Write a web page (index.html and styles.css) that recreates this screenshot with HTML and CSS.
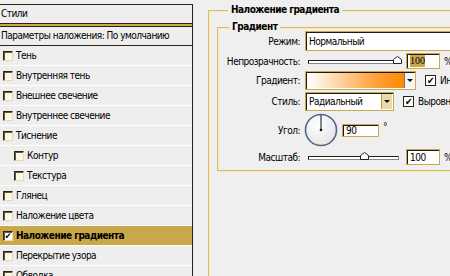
FILE: index.html
```html
<!DOCTYPE html>
<html lang="ru">
<head>
<meta charset="UTF-8">
<title>Стиль слоя</title>
<link rel="stylesheet" href="styles.css">
</head>
<body>
<div class="dialog">
    <div class="styles-panel">
        <div class="panel-title">Стили</div>
        <div class="panel-defaults">Параметры наложения: По умолчанию</div>
        <ul class="effects">
            <li><span class="cb"></span>Тень</li>
            <li><span class="cb"></span>Внутренняя тень</li>
            <li><span class="cb"></span>Внешнее свечение</li>
            <li><span class="cb"></span>Внутреннее свечение</li>
            <li><span class="cb"></span>Тиснение</li>
            <li class="sub"><span class="cb"></span>Контур</li>
            <li class="sub"><span class="cb"></span>Текстура</li>
            <li><span class="cb"></span>Глянец</li>
            <li><span class="cb"></span>Наложение цвета</li>
            <li class="active"><span class="cb checked">&#10004;</span>Наложение градиента</li>
            <li><span class="cb"></span>Перекрытие узора</li>
            <li><span class="cb"></span>Обводка</li>
        </ul>
    </div>

    <div class="settings">
        <fieldset class="group outer">
            <legend>Наложение градиента</legend>
            <fieldset class="group inner">
                <legend>Градиент</legend>
                <div class="form">
                    <label>Режим:</label>
                    <div class="ctrl"><div class="field select-wide">Нормальный</div></div>

                    <label>Непрозрачность:</label>
                    <div class="ctrl">
                        <div class="slider">
                            <div class="track"></div>
                            <svg class="thumb" style="left: 85px" width="9" height="8" viewBox="0 0 9 8"><path d="M0.5 7.5V3.5L4.5 0.5L8.5 3.5V7.5Z" fill="#fff" stroke="#222"/></svg>
                        </div>
                        <div class="field num"><span class="sel">100</span></div>
                        <span class="unit">%</span>
                    </div>

                    <label>Градиент:</label>
                    <div class="ctrl">
                        <div class="field gradient-box">
                            <div class="gradient"></div>
                            <div class="drop"><span class="arrow"></span></div>
                        </div>
                        <span class="check"><span class="box">&#10004;</span>Инверсия</span>
                    </div>

                    <label>Стиль:</label>
                    <div class="ctrl">
                        <div class="field style-select">
                            <span class="value">Радиальный</span>
                            <div class="drop beige"><span class="arrow"></span></div>
                        </div>
                        <span class="check"><span class="box">&#10004;</span>Выровнять по слою</span>
                    </div>

                    <label>Угол:</label>
                    <div class="ctrl">
                        <svg class="dial" width="34" height="34" viewBox="0 0 34 34">
                            <defs>
                                <radialGradient id="dialFill" cx="40%" cy="35%" r="70%">
                                    <stop offset="0" stop-color="#ffffff"/>
                                    <stop offset="1" stop-color="#e4e4e8"/>
                                </radialGradient>
                            </defs>
                            <circle cx="17" cy="17" r="15.5" fill="url(#dialFill)" stroke="#53648a" stroke-width="1.6"/>
                            <line x1="17" y1="17" x2="17" y2="2" stroke="#111" stroke-width="1"/>
                            <circle cx="17" cy="17" r="1.3" fill="#111"/>
                        </svg>
                        <div class="field angle">90</div>
                        <span class="deg">°</span>
                    </div>

                    <label>Масштаб:</label>
                    <div class="ctrl">
                        <div class="slider">
                            <div class="track"></div>
                            <svg class="thumb" style="left: 52px" width="9" height="8" viewBox="0 0 9 8"><path d="M0.5 7.5V3.5L4.5 0.5L8.5 3.5V7.5Z" fill="#fff" stroke="#222"/></svg>
                        </div>
                        <div class="field num">100</div>
                        <span class="unit">%</span>
                    </div>
                </div>
            </fieldset>
        </fieldset>
    </div>
</div>
</body>
</html>
```

FILE: styles.css
```css
body {
    margin: 0;
    background: #efefef;
    font-family: "DejaVu Sans Condensed", "DejaVu Sans", sans-serif;
    font-size: 10px;
    letter-spacing: -0.5px;
    color: #000;
    overflow: hidden;
}
.dialog {
    display: flex;
    align-items: flex-start;
    width: 450px;
    height: 276px;
    overflow: hidden;
}

/* left list */
.styles-panel {
    width: 192px;
    flex: none;
    margin-top: 4px;
    border-top: 1px solid #2a2416;
    border-right: 1px solid #2a2416;
    height: 300px;
    background: #eeeeee;
}
.panel-title {
    height: 18px;
    line-height: 18px;
    padding-left: 1px;
    border-bottom: 1px solid #2a2416;
}
.panel-defaults {
    height: 18px;
    line-height: 18px;
    padding-left: 1px;
    border-top: 2px solid #c9a94b;
    box-shadow: inset 0 1px 0 #2a2416;
    padding-top: 1px;
    border-bottom: 1px solid #2a2416;
    white-space: nowrap;
}
.effects {
    list-style: none;
    margin: 0;
    padding: 0;
}
.effects li {
    display: flex;
    align-items: center;
    height: 19px;
    border-bottom: 1px solid #ffffff;
    padding-left: 3px;
    white-space: nowrap;
}
.effects li.sub {
    padding-left: 14px;
}
.effects li.active {
    background: #c8a84a;
    font-weight: bold;
}
.cb {
    width: 8px;
    height: 8px;
    margin-right: 3px;
    border: 1px solid;
    border-color: #2c2414 #e7d9a8 #e7d9a8 #2c2414;
    box-shadow: inset 1px 1px 0 #6a5a30;
    background: #fbf7ea;
    font-size: 9px;
    line-height: 8px;
    text-align: center;
    overflow: hidden;
}
.cb.checked {
    background: #fff;
    font-weight: bold;
}

/* right settings */
.settings {
    flex: none;
    padding: 4px 0 0 15px;
}
.group {
    margin: 0;
    padding: 0;
    border: 1px solid #d8bc68;
    box-shadow: inset 1px 1px 0 #f7e9b8, 1px 1px 0 #f7e9b8;
}
.group legend {
    font-weight: bold;
    padding: 0 3px;
    margin-left: 11px;
    line-height: 12px;
}
.outer {
    width: 300px;
    height: 320px;
    padding: 4px 0 0 8px;
}
.inner {
    width: 280px;
    margin-top: 1px;
    padding: 0 0 5px 0;
}
.form {
    display: grid;
    grid-template-columns: 82px auto;
    grid-template-rows: 20px 16px 19px 19px 34px 16px;
    column-gap: 5px;
    row-gap: 2px;
    align-items: center;
    margin-top: -2px;
}
.form label {
    text-align: right;
    white-space: nowrap;
}
.ctrl {
    display: flex;
    align-items: center;
    white-space: nowrap;
}
.field {
    box-sizing: border-box;
    border: 1px solid #c8a850;
    box-shadow: inset 1px 1px 0 #1b1b1b;
    background: #fff;
    display: flex;
    align-items: center;
    padding-left: 3px;
}
.select-wide {
    width: 160px;
    height: 20px;
}
.slider {
    position: relative;
    width: 91px;
    height: 16px;
    margin-left: 3px;
}
.track {
    position: absolute;
    left: 0;
    right: 0;
    top: 7px;
    height: 2px;
    background: #fff;
    border: 1px solid;
    border-color: #222 #888 #888 #222;
}
.thumb {
    position: absolute;
    top: 3px;
}
.num {
    width: 34px;
    height: 16px;
    margin-left: 7px;
}
.sel {
    background: #c8a84a;
    font-family: "Liberation Serif", serif;
    font-size: 10px;
    letter-spacing: 0;
    line-height: 12px;
}
.unit {
    margin-left: 4px;
}
.gradient-box {
    width: 111px;
    height: 19px;
    padding: 1px;
}
.gradient {
    flex: 1;
    height: 100%;
    margin-left: 1px;
    background: linear-gradient(to right, #ffffff, #ffa13a 70%, #ff8a00);
}
.drop {
    width: 9px;
    height: 100%;
    display: flex;
    align-items: center;
    justify-content: center;
    border-left: 1px solid #777;
    background: #f4f4f4;
}
.drop.beige {
    width: 10px;
    background: #e7dca6;
    border-left: 1px solid #b49c50;
}
.arrow {
    width: 0;
    height: 0;
    border-left: 3px solid transparent;
    border-right: 3px solid transparent;
    border-top: 3px solid #111;
}
.check {
    display: flex;
    align-items: center;
    margin-left: 9px;
    white-space: nowrap;
}
.check .box {
    box-sizing: border-box;
    width: 11px;
    height: 11px;
    margin-right: 4px;
    border: 1px solid #2b2414;
    background: #fff;
    font-size: 10px;
    font-weight: bold;
    line-height: 9px;
    text-align: center;
}
.style-select {
    width: 89px;
    height: 19px;
    padding: 1px 1px 1px 3px;
    justify-content: space-between;
}
.dial {
    margin-left: -1px;
}
.angle {
    width: 37px;
    height: 13px;
    margin-left: 4px;
}
.deg {
    margin-left: 4px;
    align-self: flex-start;
    margin-top: 8px;
    font-size: 10px;
}
```
